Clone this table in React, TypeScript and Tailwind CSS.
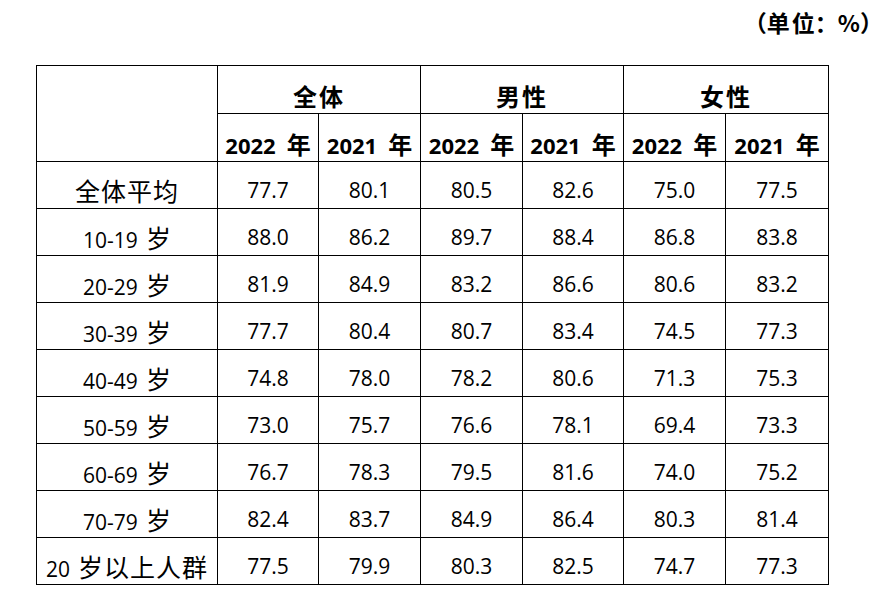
import React from 'react';

type Row = { label: React.ReactNode; values: string[] };

const cjk = "font-['Noto_Sans_CJK_SC',sans-serif]";

const Age: React.FC<{ range: string }> = ({ range }) => (
  <>
    {range}
    <span className={`${cjk} text-[25px] ml-[8px]`}>岁</span>
  </>
);

const rows: Row[] = [
  { label: <span className={`${cjk} text-[25px] tracking-[1px]`}>全体平均</span>, values: ['77.7', '80.1', '80.5', '82.6', '75.0', '77.5'] },
  { label: <Age range="10-19" />, values: ['88.0', '86.2', '89.7', '88.4', '86.8', '83.8'] },
  { label: <Age range="20-29" />, values: ['81.9', '84.9', '83.2', '86.6', '80.6', '83.2'] },
  { label: <Age range="30-39" />, values: ['77.7', '80.4', '80.7', '83.4', '74.5', '77.3'] },
  { label: <Age range="40-49" />, values: ['74.8', '78.0', '78.2', '80.6', '71.3', '75.3'] },
  { label: <Age range="50-59" />, values: ['73.0', '75.7', '76.6', '78.1', '69.4', '73.3'] },
  { label: <Age range="60-69" />, values: ['76.7', '78.3', '79.5', '81.6', '74.0', '75.2'] },
  { label: <Age range="70-79" />, values: ['82.4', '83.7', '84.9', '86.4', '80.3', '81.4'] },
  {
    label: (
      <>
        20
        <span className={`${cjk} text-[25px] ml-[8px] tracking-[1px]`}>岁以上人群</span>
      </>
    ),
    values: ['77.5', '79.9', '80.3', '82.5', '74.7', '77.3'],
  },
];

const groups = ['全体', '男性', '女性'];
const years = ['2022', '2021', '2022', '2021', '2022', '2021'];

const App: React.FC = () => {
  return (
    <div className="w-[883px] h-[597px] bg-white text-black font-['Open_Sans',sans-serif] text-[21px] overflow-hidden">
      {/* Unit */}
      <div className="h-[65px] flex justify-end pt-[8px]">
        <span className={`${cjk} font-bold text-[23px] leading-[28px]`}>（单<span className="ml-[2px]">位</span>：%）</span>
      </div>

      <table className="ml-[36px] w-[792px] table-fixed border-collapse border border-black">
        <colgroup>
          <col className="w-[181px]" />
          <col className="w-[101px]" />
          <col className="w-[102px]" />
          <col className="w-[102px]" />
          <col className="w-[101px]" />
          <col className="w-[102px]" />
          <col className="w-[103px]" />
        </colgroup>
        <thead>
          <tr className="h-[48px]">
            <th rowSpan={2} className="border border-black" />
            {groups.map((g) => (
              <th
                key={g}
                colSpan={2}
                className={`border border-black p-0 pt-[12px] align-middle ${cjk} text-[24px] font-bold leading-none tracking-[2px]`}
              >
                {g}
              </th>
            ))}
          </tr>
          <tr className="h-[48px]">
            {years.map((y, i) => (
              <th key={i} className="border border-black p-0 pt-[12px] align-middle font-bold text-[22px] leading-none whitespace-nowrap">
                {y}
                <span className={`${cjk} text-[24px] font-bold ml-[11px]`}>年</span>
              </th>
            ))}
          </tr>
        </thead>
        <tbody>
          {rows.map((r, i) => (
            <tr key={i} className="h-[47px]">
              <td className="border border-black p-0 pt-[11px] text-center align-middle leading-none whitespace-nowrap">
                {r.label}
              </td>
              {r.values.map((v, j) => (
                <td key={j} className="border border-black p-0 pt-[11px] text-center align-middle leading-none">
                  {v}
                </td>
              ))}
            </tr>
          ))}
        </tbody>
      </table>
    </div>
  );
};

export default App;
